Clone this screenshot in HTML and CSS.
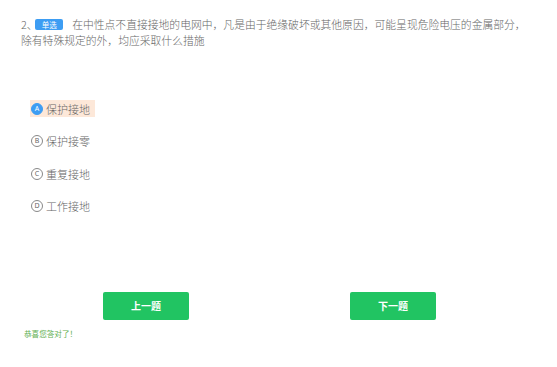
FILE: index.html
```html
<!DOCTYPE html>
<html lang="zh">
<head>
<meta charset="utf-8">
<link rel="stylesheet" href="styles.css">
</head>
<body>
<div class="page">
  <div class="question"><span class="num">2、</span><span class="badge">单选</span>在中性点不直接接地的电网中，凡是由于绝缘破坏或其他原因，可能呈现危险电压的金属部分，除有特殊规定的外，均应采取什么措施</div>
  <ul class="options">
    <li class="option selected"><span class="mark">A</span><span class="label">保护接地</span></li>
    <li class="option"><span class="mark">B</span><span class="label">保护接零</span></li>
    <li class="option"><span class="mark">C</span><span class="label">重复接地</span></li>
    <li class="option"><span class="mark">D</span><span class="label">工作接地</span></li>
  </ul>
  <div class="actions">
    <button class="btn">上一题</button>
    <button class="btn">下一题</button>
  </div>
  <div class="result">恭喜您答对了！</div>
</div>
</body>
</html>
```
FILE: styles.css
```css
html, body {
  margin: 0;
  padding: 0;
  background: #fff;
}
body {
  font-family: "Noto Sans CJK SC", "Noto Sans", sans-serif;
  color: #666;
}
.page {
  width: 557px;
  height: 367px;
  box-sizing: border-box;
  padding-top: 16px;
}
.question {
  padding: 0 22px 0 21px;
  font-size: 10.8px;
  line-height: 16px;
  color: #666;
  font-weight: 300;
}
.num {
  font-feature-settings: "halt" 1;
  margin-right: 3px;
}
.badge {
  display: inline-block;
  width: 28px;
  height: 11px;
  line-height: 11px;
  margin: 0 9px 0 0;
  background: #3d9df3;
  color: #fff;
  font-size: 7.5px;
  font-weight: 400;
  text-align: center;
  border-radius: 2px;
  vertical-align: 1px;
}
.options {
  list-style: none;
  margin: 52px 0 0 0;
  padding: 0 0 0 30px;
  display: flex;
  flex-direction: column;
  align-items: flex-start;
  gap: 15.5px;
}
.option {
  display: flex;
  align-items: center;
  height: 17px;
  padding: 0 5px 0 1px;
  font-size: 11px;
  font-weight: 300;
  color: #666;
}
.option.selected {
  background: #fde8d9;
}
.mark {
  width: 10px;
  height: 10px;
  border: 1px solid #888;
  border-radius: 50%;
  font-size: 7px;
  line-height: 10px;
  text-align: center;
  color: #666;
  margin-right: 3px;
  font-family: "Noto Sans", sans-serif;
  font-weight: 400;
}
.selected .mark {
  background: #3d9df3;
  border-color: #3d9df3;
  color: #fff;
}
.actions {
  display: flex;
  gap: 161px;
  padding-left: 103px;
  margin-top: 77px;
}
.btn {
  width: 86px;
  height: 28px;
  border: none;
  border-radius: 2px;
  background: #21c462;
  color: #fff;
  font-family: "Noto Sans CJK SC", sans-serif;
  font-size: 10px;
  font-weight: bold;
  padding: 0;
}
.result {
  margin: 8px 0 0 24px;
  font-size: 7.6px;
  line-height: 12px;
  color: #62b052;
}
```
